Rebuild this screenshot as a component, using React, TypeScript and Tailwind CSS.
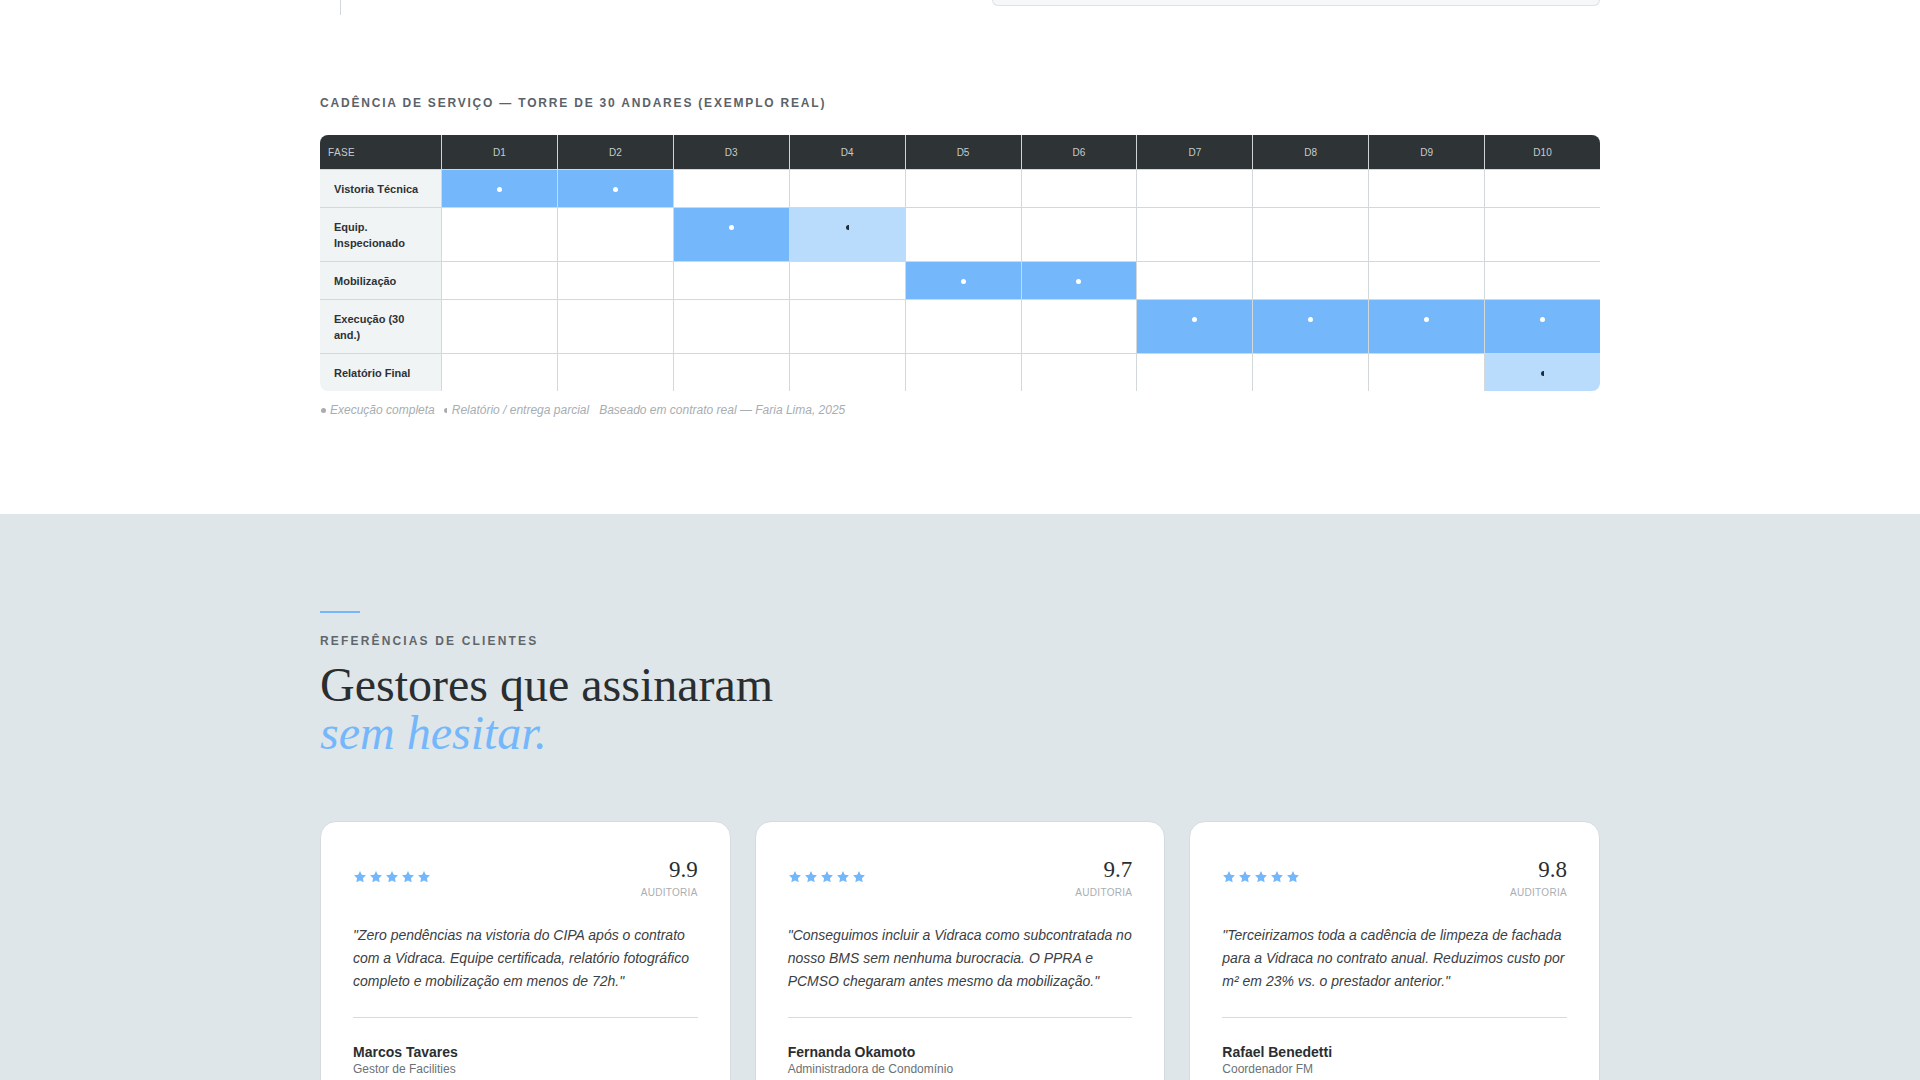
import React from 'react';

type Cell = '' | 'full' | 'part';

const DAYS = ['D1', 'D2', 'D3', 'D4', 'D5', 'D6', 'D7', 'D8', 'D9', 'D10'];

const PHASES: { label: string; cells: Cell[] }[] = [
  { label: 'Vistoria Técnica', cells: ['full', 'full', '', '', '', '', '', '', '', ''] },
  { label: 'Equip. Inspecionado', cells: ['', '', 'full', 'part', '', '', '', '', '', ''] },
  { label: 'Mobilização', cells: ['', '', '', '', 'full', 'full', '', '', '', ''] },
  { label: 'Execução (30 and.)', cells: ['', '', '', '', '', '', 'full', 'full', 'full', 'full'] },
  { label: 'Relatório Final', cells: ['', '', '', '', '', '', '', '', '', 'part'] },
];

const REVIEWS = [
  {
    score: '9.9',
    quote:
      '"Zero pendências na vistoria do CIPA após o contrato com a Vidraca. Equipe certificada, relatório fotográfico completo e mobilização em menos de 72h."',
    name: 'Marcos Tavares',
    role: 'Gestor de Facilities',
  },
  {
    score: '9.7',
    quote:
      '"Conseguimos incluir a Vidraca como subcontratada no nosso BMS sem nenhuma burocracia. O PPRA e PCMSO chegaram antes mesmo da mobilização."',
    name: 'Fernanda Okamoto',
    role: 'Administradora de Condomínio',
  },
  {
    score: '9.8',
    quote:
      '"Terceirizamos toda a cadência de limpeza de fachada para a Vidraca no contrato anual. Reduzimos custo por m² em 23% vs. o prestador anterior."',
    name: 'Rafael Benedetti',
    role: 'Coordenador FM',
  },
];

const Star: React.FC = () => (
  <svg width="14" height="14" viewBox="0 0 24 24" className="fill-[#74b7fb]">
    <path d="M12 1.8l3.1 6.5 7.1.9-5.2 4.9 1.3 7.1L12 17.8l-6.3 3.4 1.3-7.1L1.8 9.2l7.1-.9z" />
  </svg>
);

const CadenceTable: React.FC = () => (
  <div className="overflow-hidden rounded-lg">
    <div className="grid h-[34px] grid-cols-[121px_repeat(10,1fr)] bg-[#2e3335] text-[10px] text-[#c6cbce]">
      <div className="flex items-center pl-2 tracking-[0.04em]">FASE</div>
      {DAYS.map((d) => (
        <div key={d} className="flex items-center justify-center border-l border-[#cfd4d7]">
          {d}
        </div>
      ))}
    </div>
    {PHASES.map((row) => (
      <div key={row.label} className="grid grid-cols-[121px_repeat(10,1fr)] border-t border-[#d3d8db]">
        <div className="bg-[#f1f4f5] px-[14px] pt-[11px] pb-[10px] text-[11px] font-bold leading-4 text-[#2d3235]">
          {row.label}
        </div>
        {row.cells.map((c, i) => (
          <div
            key={i}
            className={
              'border-l border-[#d3d8db] pt-[11px] ' +
              (c === 'full' ? 'bg-[#74b7fb]' : c === 'part' ? 'bg-[#b9dcfc]' : 'bg-white')
            }
          >
            <div className="flex h-4 items-center justify-center">
              {c === 'full' && <span className="h-[5px] w-[5px] rounded-full bg-white" />}
              {c === 'part' && <span className="h-[5px] w-[3px] rounded-l-full bg-[#1f2d3a]" />}
            </div>
          </div>
        ))}
      </div>
    ))}
  </div>
);

export default function App() {
  return (
    <div className="min-h-screen bg-white font-['Liberation_Sans',Arial,sans-serif]">
      {/* cadência */}
      <section className="bg-white pb-[95px]">
        <div className="mx-auto w-[1280px]">
          <div className="flex items-start justify-between">
            <div className="ml-5 h-[15px] w-px bg-[#d3d8db]" />
            <div className="h-[6px] w-[608px] rounded-b-xl border-x border-b border-[#dde2e5] bg-[#f5f7f8]" />
          </div>

          <h3 className="mt-20 text-[12px] font-bold uppercase leading-4 tracking-[0.15em] text-[#5b6268]">
            Cadência de serviço — Torre de 30 andares (exemplo real)
          </h3>

          <div className="mt-6">
            <CadenceTable />
          </div>

          <p className="mt-[10px] flex items-center text-[12px] italic leading-[18px] text-[#a7adb1]">
            <span className="ml-[1px] mr-[4px] h-[5px] w-[5px] rounded-full bg-[#a7adb1]" />
            <span className="mr-[9px]">Execução completa</span>
            <span className="mr-[5px] h-[5px] w-[3px] rounded-l-full bg-[#a7adb1]" />
            <span className="mr-[10px]">Relatório / entrega parcial</span>
            <span>Baseado em contrato real — Faria Lima, 2025</span>
          </p>
        </div>
      </section>

      {/* referências */}
      <section className="bg-[#dfe6e9] pt-[97px] pb-24">
        <div className="mx-auto w-[1280px]">
          <div className="h-[2px] w-10 bg-[#74b7fb]" />
          <p className="mt-5 text-[12px] font-bold uppercase leading-4 tracking-[0.18em] text-[#5f676c]">
            Referências de clientes
          </p>
          <h2 className="mt-[12px] font-['Liberation_Serif','Times_New_Roman',serif] text-[48px] leading-[48px] text-[#2a2e31]">
            Gestores que assinaram
            <br />
            <em className="text-[#74b7fb]">sem hesitar.</em>
          </h2>

          <div className="mt-16 grid grid-cols-3 gap-6">
            {REVIEWS.map((r) => (
              <div key={r.name} className="rounded-2xl border border-[#d3dbdf] bg-white px-8 pt-9 pb-8">
                <div className="flex items-start justify-between">
                  <div className="mt-3 flex gap-[2px]">
                    <Star />
                    <Star />
                    <Star />
                    <Star />
                    <Star />
                  </div>
                  <div className="text-right">
                    <div className="font-['Liberation_Serif','Times_New_Roman',serif] text-[23px] leading-none text-[#2a2e31]">
                      {r.score}
                    </div>
                    <div className="mt-[5px] text-[10px] uppercase leading-[14px] tracking-[0.03em] text-[#a9aeb2]">
                      Auditoria
                    </div>
                  </div>
                </div>

                <p className="mt-6 text-[14px] italic leading-[23px] text-[#3b4044]">{r.quote}</p>

                <div className="mt-6 border-t border-[#d5dbde] pt-[25px]">
                  <div className="text-[14px] font-bold leading-[18px] text-[#2a2e31]">{r.name}</div>
                  <div className="text-[12px] leading-4 text-[#6b7176]">{r.role}</div>
                </div>
              </div>
            ))}
          </div>
        </div>
      </section>
    </div>
  );
}
